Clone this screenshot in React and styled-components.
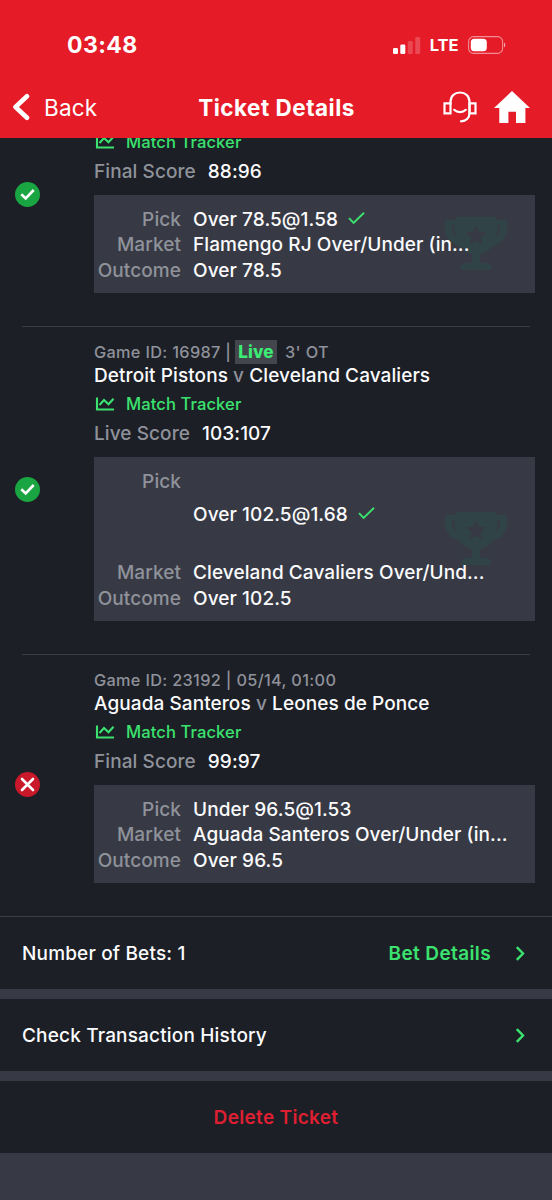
import React from 'react';
import styled, { createGlobalStyle } from 'styled-components';

const GlobalStyle = createGlobalStyle`
    * {
        box-sizing: border-box;
    }
    body {
        margin: 0;
        background-color: #373a45;
        font-family: Inter, "Liberation Sans", sans-serif;
        font-size: 19px;
        letter-spacing: 0.08px;
        color: #fbfbfd;
    }
`

const Page = styled.div`
    width: 552px;
    height: 1200px;
    overflow: hidden;
    display: flex;
    flex-direction: column;
`

const Header = styled.header`
    flex: none;
    height: 138px;
    background-color: #e51b28;
    color: white;
`

const StatusBar = styled.div`
    height: 77px;
    padding: 13px 46px 0 67px;
    display: flex;
    align-items: center;
    justify-content: space-between;
`

const Clock = styled.span`
    font-size: 23px;
    font-weight: 700;
    letter-spacing: 0.4px;
`

const StatusRight = styled.div`
    display: flex;
    align-items: center;
    gap: 9.5px;
    font-size: 16.5px;
    font-weight: 700;
    letter-spacing: 0;
    svg {
        display: block;
        overflow: visible;
    }
`

const Navbar = styled.nav`
    height: 60px;
    padding: 0 22px 0 13px;
    display: grid;
    grid-template-columns: 1fr auto 1fr;
    align-items: center;
`

const Back = styled.div`
    display: flex;
    align-items: center;
    gap: 14px;
    font-size: 22.5px;
    letter-spacing: 0.2px;
`

const Title = styled.h1`
    margin: 0 0 0 10px;
    font-size: 22.5px;
    font-weight: 700;
    letter-spacing: 0.5px;
`

const NavIcons = styled.div`
    display: flex;
    align-items: center;
    justify-content: flex-end;
    gap: 17px;
`

const Games = styled.main`
    flex: none;
    height: 778px;
    overflow: hidden;
    display: flex;
    flex-direction: column;
    justify-content: flex-end;
    background-color: #1c1f26;
`

const GameRow = styled.article`
    flex: none;
    height: ${props => props.$tall ? 327 : 261}px;
    margin: 0 17px 0 15px;
    display: flex;
    align-items: center;
    gap: 54px;
`

const Divider = styled.hr`
    flex: none;
    width: 508px;
    height: 1px;
    margin: 0 0 0 22px;
    border: 0;
    background-color: #3a3d45;
`

const StatusIcon = styled.svg`
    flex: none;
    display: block;
    width: 25px;
    height: 25px;
    margin-bottom: 2px;
`

const GameBody = styled.div`
    align-self: flex-end;
    width: 441px;
    padding-bottom: 33.5px;
`

const GameInfo = styled.div`
    height: 25px;
    display: flex;
    align-items: center;
    white-space: pre;
    font-size: 16.3px;
    font-weight: 500;
    letter-spacing: 0.33px;
    color: #8f929a;
`

const LiveTag = styled.span`
    height: 24px;
    margin: 0 8.5px 0 4px;
    padding: 0 3px;
    display: flex;
    align-items: center;
    background-color: #44464d;
    color: #3cec74;
    font-size: 17px;
    font-weight: 800;
    letter-spacing: 0.1px;
`

const Teams = styled.div`
    height: 24px;
    line-height: 24px;
    font-weight: 500;
    span {
        color: #8f929a;
    }
`

const Tracker = styled.div`
    height: 32px;
    display: flex;
    align-items: center;
    gap: 10px;
    color: #3be26f;
    font-size: 16.6px;
    font-weight: 500;
`

const Score = styled.div`
    height: 37px;
    padding-top: 0.6px;
    line-height: 26px;
    display: flex;
    gap: 12px;
    font-weight: 500;
    span {
        color: #8f929a;
    }
`

const PickBox = styled.div`
    position: relative;
    padding: 11.6px 0 9.4px;
    background-color: #373a44;
`

const Trophy = styled.svg`
    position: absolute;
    right: 28px;
    top: 50%;
    width: 62px;
    height: 54px;
    margin-top: -27px;
`

const PickRow = styled.div`
    position: relative;
    height: ${props => props.$tall ? 91.5 : 25.5}px;
    line-height: 25.5px;
    display: flex;
    gap: 12px;
    font-weight: 500;
`

const Label = styled.span`
    width: 87px;
    text-align: right;
    color: #8f929a;
`

const Value = styled.span`
    display: flex;
    align-items: center;
    gap: 10px;
    white-space: nowrap;
`

const Footer = styled.footer`
    flex: none;
    border-top: 1px solid #3a3d45;
    display: flex;
    flex-direction: column;
    gap: 10.7px;
`

const FooterRow = styled.div`
    height: 71.5px;
    padding: 1px 27px 0 22px;
    display: flex;
    align-items: center;
    justify-content: space-between;
    background-color: #1c1f26;
    font-weight: 500;
    letter-spacing: 0.17px;
`

const DeleteRow = styled(FooterRow)`
    padding: 1px 22px 0;
    justify-content: center;
    color: #de1f31;
    font-weight: 600;
    letter-spacing: 0.32px;
`

const FooterLink = styled.span`
    display: flex;
    align-items: center;
    gap: 24px;
    color: #3be26f;
    font-weight: 600;
    letter-spacing: 0.38px;
`

const games = [
    {
        scoreLabel: "Final Score",
        score: "88:96",
        won: true,
        pick: "Over 78.5@1.58",
        market: "Flamengo RJ Over/Under (in...",
        outcome: "Over 78.5"
    },
    {
        info: "Game ID: 16987 |",
        live: "3' OT",
        home: "Detroit Pistons",
        away: "Cleveland Cavaliers",
        scoreLabel: "Live Score",
        score: "103:107",
        won: true,
        tall: true,
        pick: "Over 102.5@1.68",
        market: "Cleveland Cavaliers Over/Und...",
        outcome: "Over 102.5"
    },
    {
        info: "Game ID: 23192 | 05/14, 01:00",
        home: "Aguada Santeros",
        away: "Leones de Ponce",
        scoreLabel: "Final Score",
        score: "99:97",
        won: false,
        pick: "Under 96.5@1.53",
        market: "Aguada Santeros Over/Under (in...",
        outcome: "Over 96.5"
    }
]

const Signal = () => (
    <svg width="27" height="17" viewBox="0 0 27 17" fill="white">
        <rect x="0" y="11" width="5" height="6" rx="1.3" />
        <rect x="7.3" y="7.5" width="5" height="9.5" rx="1.3" />
        <rect x="14.8" y="4" width="5" height="13" rx="1.3" opacity=".2" />
        <rect x="22.2" y="0" width="5" height="17" rx="1.3" opacity=".2" />
    </svg>
)

const Battery = () => (
    <svg width="38" height="18" viewBox="0 0 38 18" fill="none">
        <rect x=".6" y=".6" width="34" height="16.8" rx="5" stroke="white" strokeOpacity=".5" strokeWidth="1.1" />
        <rect x="2.8" y="2.7" width="16" height="12.6" rx="3.5" fill="white" />
        <path d="M36 6.5v5c1.7-.8 1.7-4.2 0-5z" fill="white" fillOpacity=".6" />
    </svg>
)

const BackIcon = () => (
    <svg width="17" height="28" viewBox="0 0 17 28" fill="none" stroke="white" strokeWidth="4.6" strokeLinecap="round" strokeLinejoin="round">
        <path d="M14 3.2L2.500 14 14 24.800" />
    </svg>
)

const Headset = () => (
    <svg width="34" height="32" viewBox="0 0 34 32" fill="none" stroke="white" strokeWidth="2.2">
        <path d="M7.500 13v-2C7.500 5.200 11.600 1.500 17 1.500s9.500 3.700 9.500 9.500v11c0 5-3.500 8-8.500 8.300" strokeLinecap="round" />
        <path d="M1.500 12.300h6v10h-6zM26.500 12.300h6v10h-6z" />
        <path d="M11.200 18.800c3 3 8.600 3 11.600 0" strokeLinecap="round" />
    </svg>
)

const Home = () => (
    <svg width="36" height="32" viewBox="0 0 36 32" fill="white">
        <path d="M18 0l18 17h-4.600v15H22V20.700h-7.600V32H5.300V17H0z" />
    </svg>
)

const ChartIcon = () => (
    <svg width="22" height="16" viewBox="0 0 22 16" fill="none" stroke="#3be26f" strokeWidth="2.100">
        <path d="M3 1.500v12h17M5.500 9l4.500-5 4.500 4.200 5-5.500" />
    </svg>
)

const Tick = () => (
    <svg width="17" height="14" viewBox="0 0 17 14" fill="none" stroke="#3be26f" strokeWidth="1.900">
        <path d="M1 6.200l4.600 4.800L16 .8" />
    </svg>
)

const Chevron = () => (
    <svg width="10" height="15" viewBox="0 0 10 15" fill="none" stroke="#3be26f" strokeWidth="2.400">
        <path d="M1.800 1.200L8 7.500l-6.200 6.300" />
    </svg>
)

const ResultIcon = ({ won }) => (
    <StatusIcon viewBox="0 0 25 25" fill="none" stroke="white">
        <circle cx="12.500" cy="12.500" r="12.500" fill={won ? "#19a541" : "#c91829"} stroke="none" />
        {won
            ? <path d="M6.300 12.300l4.400 4.200 8-8.500" strokeWidth="2.600" />
            : <path d="M7 7l11 11M18 7L7 18" strokeWidth="2.600" strokeLinecap="round" />
        }
    </StatusIcon>
)

const TrophyIcon = () => (
    <Trophy viewBox="0 0 62 54">
        <path
            fill="#304346"
            fillRule="evenodd"
            d="M11 0h40v3h11v9c0 8-6 14-14 17-3 4-8 7-13 8v9h6c3 0 5 2 5 4v3H16v-3c0-2 2-4 5-4h6v-9c-5-1-10-4-13-8C6 26 0 20 0 12V3h11zM7.500 8v5c0 3 1.500 6 3.500 7-1-4-1.500-7-1.500-12zM54.500 8h-2c0 5-.5 8-1.500 12 2-1 3.500-4 3.500-7zM31 8l-3 6.500-7 .8 5.200 5-1.300 7L31 24l6.100 3.300-1.300-7 5.200-5-7-.8z"
        />
    </Trophy>
)

class Game extends React.Component {

    render(){
        const { game } = this.props
        return (
            <GameRow $tall={game.tall}>
                <ResultIcon won={game.won} />
                <GameBody>
                    {game.info && (
                        <GameInfo>
                            {game.info}
                            {game.live && <LiveTag>Live</LiveTag>}
                            {game.live}
                        </GameInfo>
                    )}
                    {game.home && <Teams>{game.home} <span>v</span> {game.away}</Teams>}
                    <Tracker><ChartIcon />Match Tracker</Tracker>
                    <Score><span>{game.scoreLabel}</span>{game.score}</Score>
                    <PickBox>
                        {game.won && <TrophyIcon />}
                        <PickRow $tall={game.tall}>
                            <Label>Pick</Label>
                            <Value>{game.pick}{game.won && <Tick />}</Value>
                        </PickRow>
                        <PickRow>
                            <Label>Market</Label>
                            <Value>{game.market}</Value>
                        </PickRow>
                        <PickRow>
                            <Label>Outcome</Label>
                            <Value>{game.outcome}</Value>
                        </PickRow>
                    </PickBox>
                </GameBody>
            </GameRow>
        );
    }

}

const App = () => (
    <Page>
        <GlobalStyle />
        <Header>
            <StatusBar>
                <Clock>03:48</Clock>
                <StatusRight>
                    <Signal />
                    LTE
                    <Battery />
                </StatusRight>
            </StatusBar>
            <Navbar>
                <Back><BackIcon />Back</Back>
                <Title>Ticket Details</Title>
                <NavIcons>
                    <Headset />
                    <Home />
                </NavIcons>
            </Navbar>
        </Header>
        <Games>
        {
            games.map((game, i) =>
            (
                <React.Fragment key={game.pick}>
                    {i > 0 && <Divider />}
                    <Game game={game} />
                </React.Fragment>
            ))
        }
        </Games>
        <Footer>
            <FooterRow>
                Number of Bets: 1
                <FooterLink>Bet Details<Chevron /></FooterLink>
            </FooterRow>
            <FooterRow>
                Check Transaction History
                <Chevron />
            </FooterRow>
            <DeleteRow>Delete Ticket</DeleteRow>
        </Footer>
    </Page>
)

export default App
